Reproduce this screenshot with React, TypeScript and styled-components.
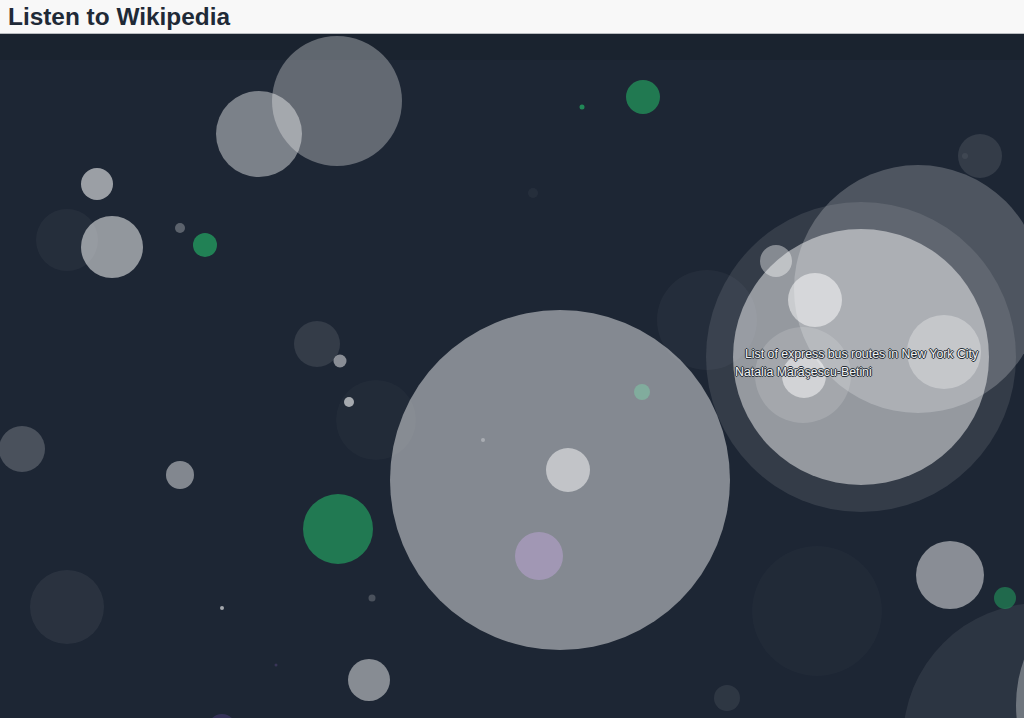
import styled, { createGlobalStyle } from "styled-components";

const GlobalStyle = createGlobalStyle`
  html, body, #root {
    margin: 0;
    padding: 0;
    height: 100%;
  }
  body {
    font-family: "Liberation Sans", Arial, sans-serif;
    background: #1d2634;
    overflow: hidden;
  }
`;

const Page = styled.div`
  display: flex;
  flex-direction: column;
  height: 100vh;
`;

const Header = styled.header`
  height: 33px;
  flex-shrink: 0;
  display: flex;
  align-items: center;
  padding: 0 8px;
  background: #f8f8f8;
  border-bottom: 1px solid #b9bcc0;
`;

const Title = styled.h1`
  margin: 0;
  font-size: 24.4px;
  font-weight: bold;
  color: #1f2a37;
`;

const Canvas = styled.main`
  position: relative;
  flex: 1;
  background: #1d2634;
  overflow: hidden;
`;

const TopBand = styled.div`
  height: 26px;
  background: rgba(0, 0, 0, 0.08);
`;

const Bubbles = styled.svg`
  position: absolute;
  inset: 0;
  width: 100%;
  height: 100%;
`;

const Label = styled.span<{ $x: number; $y: number }>`
  position: absolute;
  left: ${(p) => p.$x}px;
  top: ${(p) => p.$y}px;
  font-size: 12.3px;
  line-height: 13px;
  color: #f2f3f4;
  white-space: nowrap;
  text-shadow:
    -1px 0 #262d36,
    1px 0 #262d36,
    0 -1px #262d36,
    0 1px #262d36,
    0 0 1px #262d36;
`;

interface Bubble {
  x: number;
  y: number;
  r: number;
  fill: string;
  o: number;
}

const OFFSET = 34;

// page coordinates, shifted by the header height when drawn
const bubbles: Bubble[] = [
  { x: 337, y: 101, r: 65, fill: "#ffffff", o: 0.31 },
  { x: 259, y: 134, r: 43, fill: "#ffffff", o: 0.42 },
  { x: 97, y: 184, r: 16, fill: "#ffffff", o: 0.56 },
  { x: 67, y: 240, r: 31, fill: "#ffffff", o: 0.04 },
  { x: 112, y: 247, r: 31, fill: "#ffffff", o: 0.52 },
  { x: 180, y: 228, r: 5, fill: "#ffffff", o: 0.28 },
  { x: 205, y: 245, r: 12, fill: "#23a060", o: 0.75 },
  { x: 643, y: 97, r: 17, fill: "#23a060", o: 0.68 },
  { x: 582, y: 107, r: 2.5, fill: "#23a060", o: 0.8 },
  { x: 533, y: 193, r: 5, fill: "#ffffff", o: 0.04 },
  { x: 980, y: 156, r: 22, fill: "#ffffff", o: 0.1 },
  { x: 965, y: 156, r: 3, fill: "#ffffff", o: 0.06 },
  { x: 707, y: 320, r: 50, fill: "#ffffff", o: 0.035 },
  { x: 861, y: 357, r: 155, fill: "#ffffff", o: 0.1 },
  { x: 918, y: 289, r: 124, fill: "#ffffff", o: 0.22 },
  { x: 861, y: 357, r: 128, fill: "#ffffff", o: 0.48 },
  { x: 776, y: 261, r: 16, fill: "#ffffff", o: 0.4 },
  { x: 815, y: 300, r: 27, fill: "#ffffff", o: 0.5 },
  { x: 944, y: 352, r: 37, fill: "#ffffff", o: 0.3 },
  { x: 803, y: 375, r: 48, fill: "#ffffff", o: 0.14 },
  { x: 804, y: 376, r: 22, fill: "#ffffff", o: 0.5 },
  { x: 376, y: 420, r: 40, fill: "#ffffff", o: 0.025 },
  { x: 317, y: 344, r: 23, fill: "#ffffff", o: 0.1 },
  { x: 340, y: 361, r: 6.5, fill: "#ffffff", o: 0.48 },
  { x: 349, y: 402, r: 5, fill: "#ffffff", o: 0.6 },
  { x: 560, y: 480, r: 170, fill: "#ffffff", o: 0.46 },
  { x: 568, y: 470, r: 22, fill: "#ffffff", o: 0.5 },
  { x: 539, y: 556, r: 24, fill: "#c6a8e0", o: 0.45 },
  { x: 642, y: 392, r: 8, fill: "#7ee0b0", o: 0.4 },
  { x: 483, y: 440, r: 2, fill: "#ffffff", o: 0.3 },
  { x: 22, y: 449, r: 23, fill: "#ffffff", o: 0.2 },
  { x: 180, y: 475, r: 14, fill: "#ffffff", o: 0.45 },
  { x: 338, y: 529, r: 35, fill: "#239a5e", o: 0.72 },
  { x: 67, y: 607, r: 37, fill: "#ffffff", o: 0.06 },
  { x: 222, y: 608, r: 2, fill: "#ffffff", o: 0.6 },
  { x: 372, y: 598, r: 3.5, fill: "#ffffff", o: 0.2 },
  { x: 276, y: 665, r: 1.5, fill: "#7a5ba8", o: 0.3 },
  { x: 222, y: 728, r: 14, fill: "#6a4ba8", o: 0.3 },
  { x: 369, y: 680, r: 21, fill: "#ffffff", o: 0.47 },
  { x: 817, y: 611, r: 65, fill: "#ffffff", o: 0.02 },
  { x: 950, y: 575, r: 34, fill: "#ffffff", o: 0.48 },
  { x: 1040, y: 740, r: 137, fill: "#ffffff", o: 0.07 },
  { x: 1150, y: 705, r: 134, fill: "#ffffff", o: 0.32 },
  { x: 1005, y: 598, r: 11, fill: "#23a060", o: 0.55 },
  { x: 727, y: 698, r: 13, fill: "#ffffff", o: 0.08 },
];

export default function App() {
  return (
    <Page>
      <GlobalStyle />
      <Header>
        <Title>Listen to Wikipedia</Title>
      </Header>
      <Canvas>
        <TopBand />
        <Bubbles>
          {bubbles.map((b, i) => (
            <circle
              key={i}
              cx={b.x}
              cy={b.y - OFFSET}
              r={b.r}
              fill={b.fill}
              fillOpacity={b.o}
            />
          ))}
        </Bubbles>
        <Label $x={745} $y={348 - OFFSET}>
          List of express bus routes in New York City
        </Label>
        <Label $x={735} $y={366 - OFFSET}>
          Natalia Mărăşescu-Betini
        </Label>
      </Canvas>
    </Page>
  );
}
